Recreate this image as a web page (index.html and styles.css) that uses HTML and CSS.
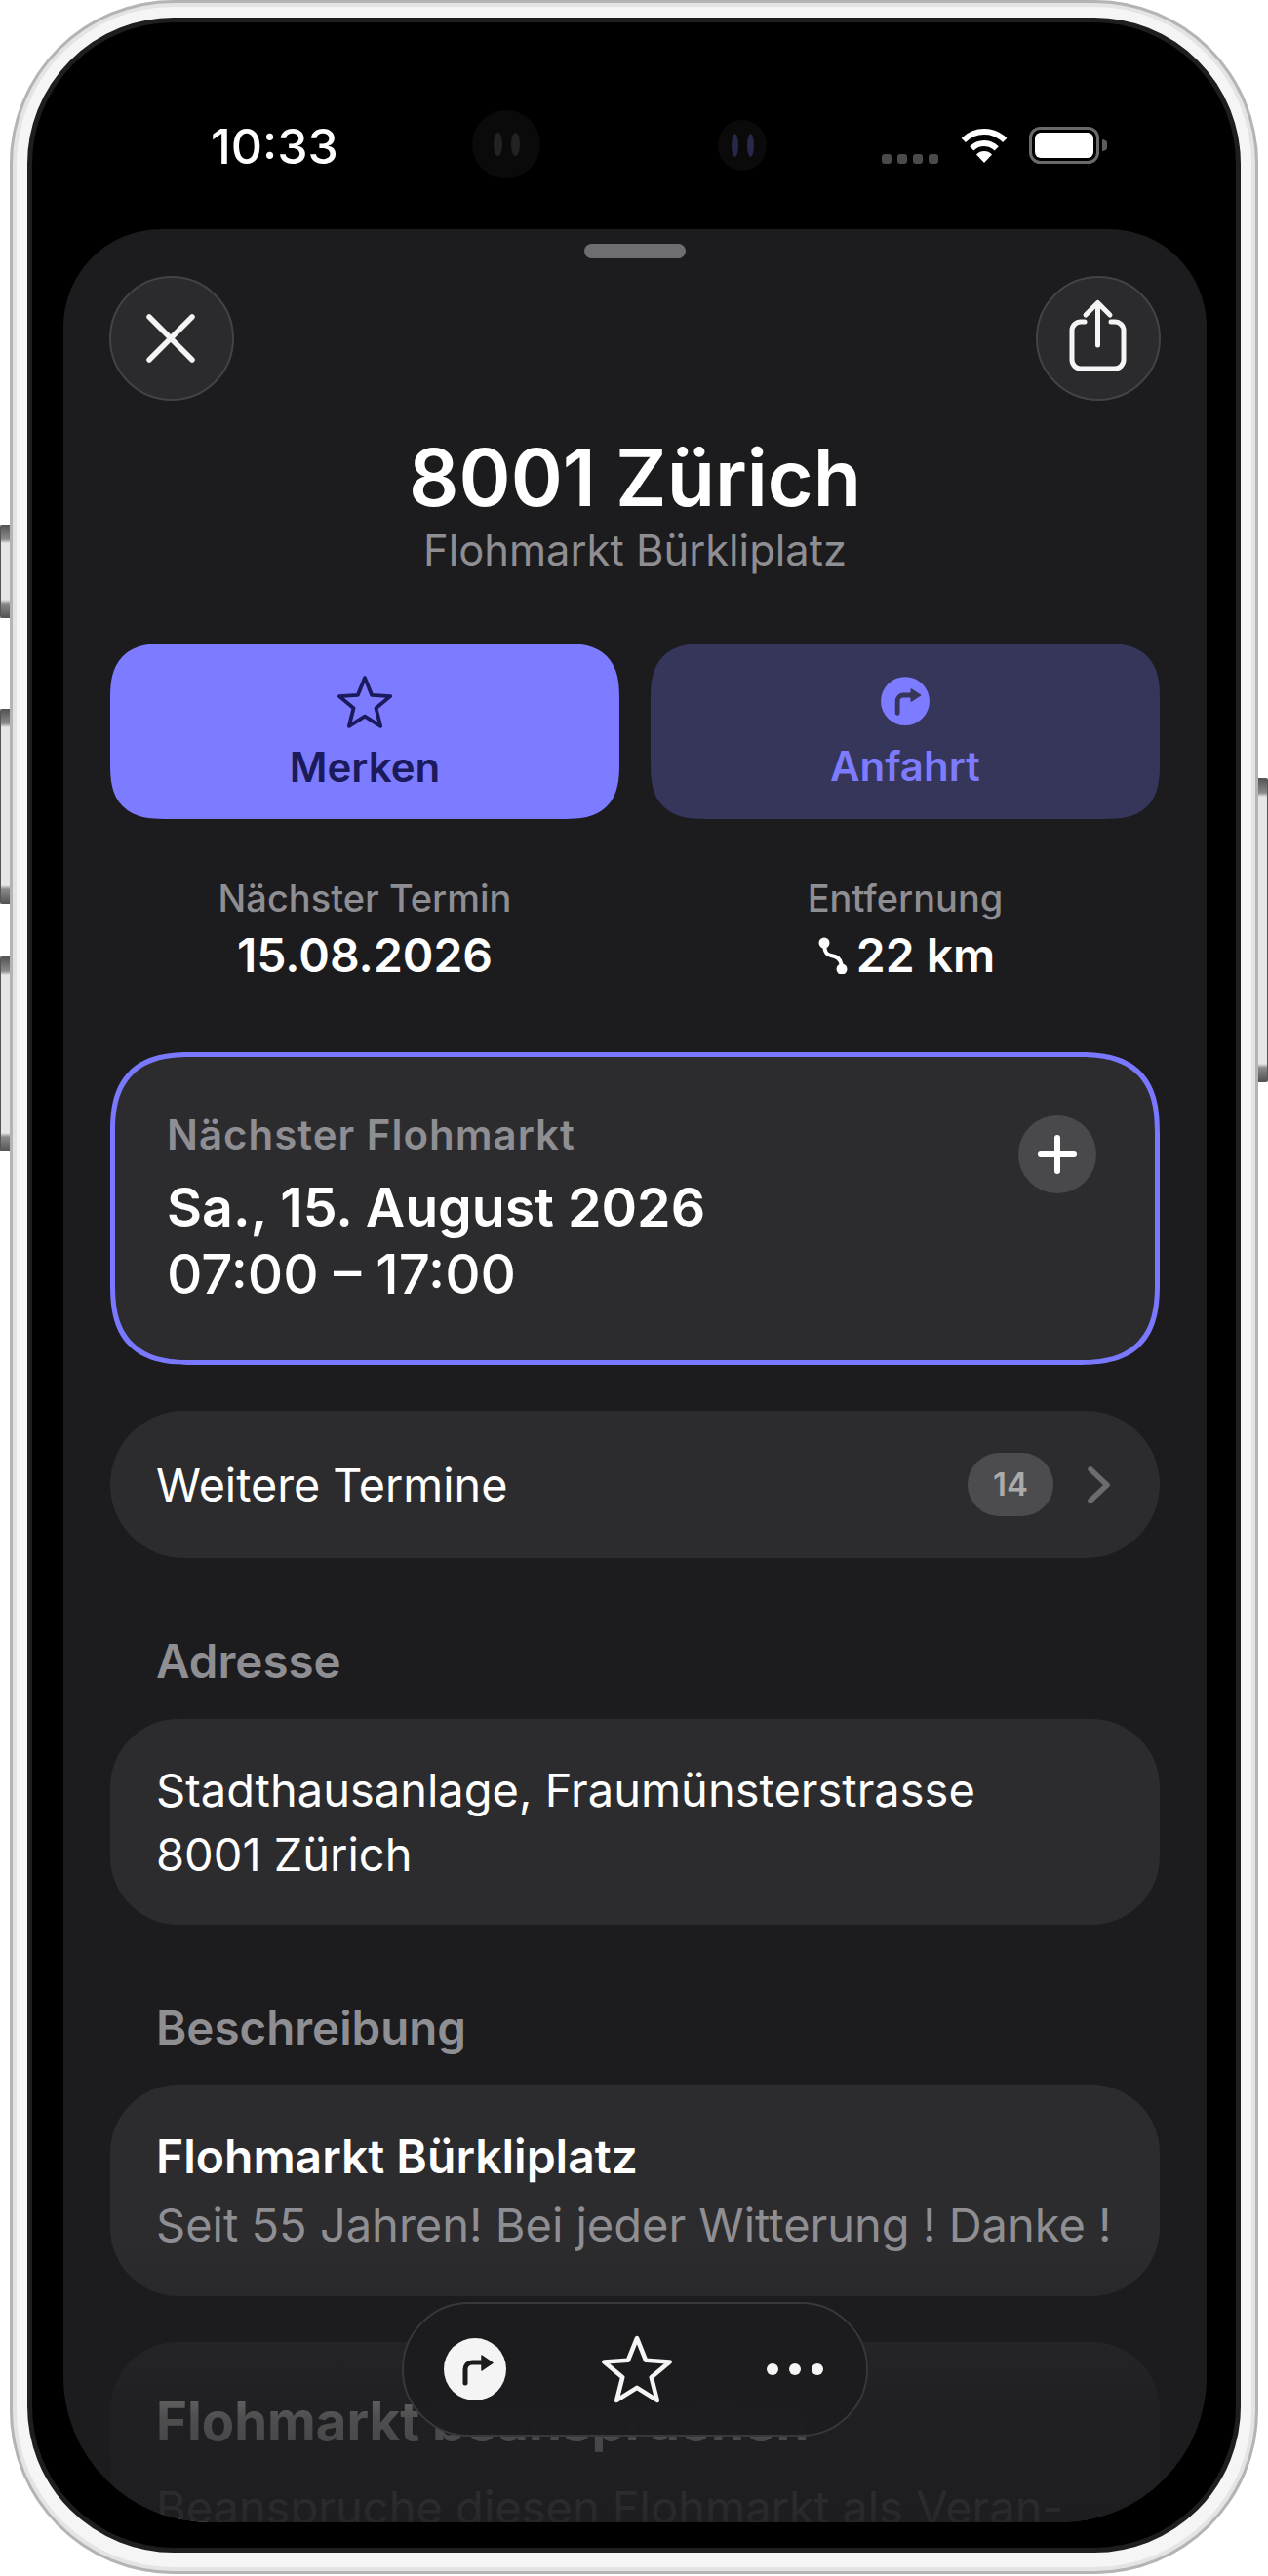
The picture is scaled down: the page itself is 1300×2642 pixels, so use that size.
FILE: index.html
```html
<!DOCTYPE html>
<html lang="de">
<head>
<meta charset="utf-8">
<title>8001 Zürich</title>
<link rel="stylesheet" href="styles.css">
</head>
<body>
<div class="device">
  <span class="hw hw-l1"></span>
  <span class="hw hw-l2"></span>
  <span class="hw hw-l3"></span>
  <span class="hw hw-r1"></span>
  <div class="screen">
    <div class="status">
      <span class="time">10:33</span>
      <span class="lens lens-a"><i></i><i></i></span>
      <span class="lens lens-b"><i></i><i></i></span>
      <span class="signal"><i></i><i></i><i></i><i></i></span>
      <svg class="wifi" viewBox="0 0 48 35"><path d="M2.8 11.8A30 30 0 0 1 45.2 11.8" fill="none" stroke="#fff" stroke-width="6"/><path d="M11.3 20.3A18 18 0 0 1 36.700 20.300" fill="none" stroke="#fff" stroke-width="6"/><path d="M24 35L16 26.500A11 11 0 0 1 32 26.500Z" fill="#fff"/></svg>
      <svg class="battery" viewBox="0 0 80 38"><rect x="1.500" y="1.500" width="69" height="35" rx="10" fill="none" stroke="#6a6a6a" stroke-width="3"/><rect x="6" y="6" width="60" height="26" rx="6" fill="#fff"/><path d="M75 13a6 6 0 0 1 0 12z" fill="#5c5c5c"/></svg>
    </div>
    <main class="sheet">
      <div class="handle"></div>
      <div class="topbar">
        <button class="round-btn">
          <svg viewBox="0 0 124 124"><path d="M39 40L83 84M83 40L39 84" fill="none" stroke="#f5f5f5" stroke-width="5.500" stroke-linecap="round"/></svg>
        </button>
        <button class="round-btn">
          <svg viewBox="0 0 124 124"><path d="M48 45H44a9 9 0 0 0-9 9V84a9 9 0 0 0 9 9H79a9 9 0 0 0 9-9V54a9 9 0 0 0-9-9H75" fill="none" stroke="#f5f5f5" stroke-width="5" stroke-linecap="round"/><path d="M61.500 69V27M49 38L61.500 25.500L74 38" fill="none" stroke="#f5f5f5" stroke-width="5" stroke-linecap="round" stroke-linejoin="round"/></svg>
        </button>
      </div>
      <h1 class="title">8001 Zürich</h1>
      <p class="subtitle">Flohmarkt Bürkliplatz</p>
      <div class="actions">
        <button class="action action-primary">
          <svg class="action-icon" viewBox="-51 -55.750 102 102"><polygon points="0,-50 12.900,-17.800 47.600,-15.450 20.900,6.800 29.400,40.450 0,22 -29.400,40.450 -20.900,6.800 -47.600,-15.450 -12.900,-17.800" fill="none" stroke="#1b1a5c" stroke-width="7" stroke-linejoin="round"/></svg>
          <span class="action-label">Merken</span>
        </button>
        <button class="action action-secondary">
          <svg class="action-icon" viewBox="0 0 64 64"><circle cx="32" cy="31" r="28.500" fill="#7d7bff"/><path d="M23 45V31a7 7 0 0 1 7-7H41" fill="none" stroke="#36365a" stroke-width="5.500" stroke-linecap="round"/><path d="M39 17L50 24L39 31Z" fill="#36365a" stroke="#36365a" stroke-width="1.500" stroke-linejoin="round"/></svg>
          <span class="action-label">Anfahrt</span>
        </button>
      </div>
      <div class="stats">
        <div class="stat">
          <span class="stat-label">Nächster Termin</span>
          <span class="stat-value">15.08.2026</span>
        </div>
        <div class="stat">
          <span class="stat-label">Entfernung</span>
          <span class="stat-value">
            <svg class="route" viewBox="0 0 36 38"><path d="M9 5C9 20 14 18 20 20C26 22 27 28 27 33" fill="none" stroke="#fff" stroke-width="4"/><circle cx="9" cy="6" r="5.500" fill="#fff"/><circle cx="27" cy="33" r="5.500" fill="#fff"/></svg>
            22 km
          </span>
        </div>
      </div>
      <section class="next-card">
        <div class="next-text">
          <div class="next-label">Nächster Flohmarkt</div>
          <div class="next-date">Sa., 15. August 2026</div>
          <div class="next-time">07:00 – 17:00</div>
        </div>
        <button class="plus-btn">
          <svg viewBox="0 0 80 80"><path d="M40 23V57M23 40H57" fill="none" stroke="#fff" stroke-width="6" stroke-linecap="round"/></svg>
        </button>
      </section>
      <div class="more-row">
        <span class="more-text">Weitere Termine</span>
        <span class="badge">14</span>
        <svg class="chevron" viewBox="0 0 26 38"><path d="M4 3L21 19L4 35" fill="none" stroke="#6c6c6e" stroke-width="5.500" stroke-linecap="round" stroke-linejoin="round"/></svg>
      </div>
      <h2 class="section-label">Adresse</h2>
      <div class="card address-card">Stadthausanlage, Fraumünsterstrasse<br>8001 Zürich</div>
      <h2 class="section-label">Beschreibung</h2>
      <div class="card desc-card">
        <div class="desc-title">Flohmarkt Bürkliplatz</div>
        <div class="desc-text">Seit 55 Jahren! Bei jeder Witterung ! Danke !</div>
      </div>
      <div class="card claim-card">
        <div class="claim-title">Flohmarkt beanspruchen</div>
        <div class="claim-text">Beanspruche diesen Flohmarkt als Veran-</div>
      </div>
      <div class="fade"></div>
      <nav class="toolbar">
        <svg class="tool-turn" viewBox="0 0 64 64"><circle cx="32" cy="32" r="32" fill="#f4f4f4"/><path d="M22 46V32a7 7 0 0 1 7-7H41" fill="none" stroke="#1c1c1e" stroke-width="5" stroke-linecap="round"/><path d="M39 18L50 25.500L39 33Z" fill="#1c1c1e" stroke="#1c1c1e" stroke-width="1.500" stroke-linejoin="round"/></svg>
        <svg class="tool-star" viewBox="-51 -55.750 102 102"><polygon points="0,-50 12.900,-17.800 47.600,-15.450 20.900,6.800 29.400,40.450 0,22 -29.400,40.450 -20.900,6.800 -47.600,-15.450 -12.900,-17.800" fill="none" stroke="#f5f5f5" stroke-width="6.500" stroke-linejoin="round"/></svg>
        <span class="tool-dots"><i></i><i></i><i></i></span>
      </nav>
    </main>
  </div>
</div>
</body>
</html>
```
FILE: styles.css
```css
* { box-sizing: border-box; }
html, body { margin: 0; padding: 0; }
body {
  width: 1300px;
  height: 2642px;
  background: #fff;
  overflow: hidden;
  font-family: "Inter", "Liberation Sans", sans-serif;
  color: #fff;
}
button { font: inherit; color: inherit; border: 0; padding: 0; background: none; }
h1, h2, p { margin: 0; }

.device {
  position: relative;
  margin-left: 10px;
  width: 1280px;
  height: 2640px;
  padding: 18px 18px 22px;
  border-radius: 168px;
  background: #f5f5f5;
  box-shadow: inset 0 0 0 3px #b4b4b4, inset 0 0 0 7px #e4e4e4;
}
.hw {
  position: absolute;
  width: 10px;
  background: linear-gradient(#555 0, #8a8a8a 14px, #e6e6e6 18px, #e6e6e6 calc(100% - 18px), #8a8a8a calc(100% - 14px), #555 100%);
  border: 1px solid #555;
}
.hw-l1 { left: -10px; top: 538px; height: 96px; border-right: 0; border-radius: 2px 0 0 2px; }
.hw-l2 { left: -10px; top: 727px; height: 200px; border-right: 0; border-radius: 2px 0 0 2px; }
.hw-l3 { left: -10px; top: 981px; height: 200px; border-right: 0; border-radius: 2px 0 0 2px; }
.hw-r1 { left: 1280px; top: 798px; height: 312px; border-left: 0; border-radius: 0 2px 2px 0; }

.screen {
  display: flex;
  flex-direction: column;
  height: 2600px;
  padding: 0 30px 26px 32px;
  border: 5px solid #1e1e1e;
  border-radius: 150px;
  background: #000;
  overflow: hidden;
}

.status { display: flex; align-items: flex-start; height: 212px; flex: none; padding-left: 151px; }
.time { width: 128px; margin-top: 103px; font-size: 50px; line-height: 48px; font-weight: 500; white-space: nowrap; }
.lens { display: flex; align-items: center; justify-content: center; gap: 9px; border-radius: 50%; background: #0a0a0a; }
.lens i { width: 9px; height: 24px; border-radius: 50%; background: #232325; }
.lens-a { width: 70px; height: 70px; margin-left: 140px; margin-top: 90px; }
.lens-b { width: 50px; height: 52px; margin-left: 182px; margin-top: 100px; }
.lens-b i { width: 7px; background: #28284a; }
.signal { display: flex; gap: 6px; margin-left: 118px; margin-top: 135px; }
.signal i { width: 10px; height: 10px; border-radius: 3px; background: #4a4a4a; }
.wifi { width: 48px; height: 35px; margin-left: 23px; margin-top: 109px; }
.battery { width: 80px; height: 38px; margin-left: 22px; margin-top: 107px; }

.sheet {
  position: relative;
  flex: 1;
  min-height: 0;
  padding: 15px 48px 0;
  background: #1c1c1e;
  border-radius: 100px 100px 150px 150px;
  overflow: hidden;
}
.handle { width: 104px; height: 15px; margin: 0 auto; border-radius: 8px; background: #6e6e70; }
.topbar { display: flex; justify-content: space-between; margin: 18px -1px 0 -1px; }
.round-btn {
  display: block;
  width: 128px;
  height: 128px;
  border: 2px solid #434345;
  border-radius: 50%;
  background: #2b2b2d;
}
.round-btn svg { display: block; width: 124px; height: 124px; }

.title { margin-top: 33px; text-align: center; font-size: 80.500px; line-height: 92px; font-weight: 600; }
.subtitle { margin-top: 4px; text-align: center; font-size: 43.500px; line-height: 48px; color: #8e8e93; }

.actions { display: grid; grid-template-columns: 522px 522px; justify-content: space-between; margin-top: 72px; }
.action { display: flex; flex-direction: column; align-items: center; height: 180px; padding-top: 32px; border-radius: 56px; corner-shape: superellipse(1.4); }
.action-icon { width: 56px; height: 56px; }
.action-label { margin-top: 15px; font-size: 42px; line-height: 48px; font-weight: 600; }
.action-secondary .action-label { margin-top: 14px; }
.action-primary { background: #7d7bff; color: #1b1a5c; }
.action-secondary { background: #36365a; color: #7d7bff; }

.stats { display: grid; grid-template-columns: 522px 522px; justify-content: space-between; margin-top: 59px; }
.stat { display: flex; flex-direction: column; align-items: center; }
.stat-label { font-size: 38px; line-height: 44px; font-weight: 500; color: #8e8e93; }
.stat-value { display: flex; align-items: center; gap: 6px; margin-top: 9px; font-size: 48px; line-height: 56px; font-weight: 600; }
.route { width: 36px; height: 38px; }

.next-card {
  display: flex;
  justify-content: space-between;
  align-items: flex-start;
  height: 321px;
  margin-top: 71px;
  padding: 56px 60px 0 53px;
  border: 5px solid #7a78ff;
  border-radius: 84px;
  corner-shape: superellipse(1.4);
  background: #2c2c2e;
}
.next-label { font-size: 42px; line-height: 48px; font-weight: 600; letter-spacing: 1px; color: #8e8e93; }
.next-date { margin-top: 15px; font-size: 55.500px; line-height: 69px; font-weight: 600; }
.next-time { font-size: 56.500px; line-height: 69px; font-weight: 500; }
.plus-btn { width: 80px; height: 80px; margin-top: 4px; border-radius: 50%; background: #49494b; }
.plus-btn svg { display: block; width: 80px; height: 80px; }

.more-row {
  display: flex;
  align-items: center;
  height: 151px;
  margin-top: 47px;
  padding: 0 49px 0 47px;
  border-radius: 76px;
  background: #2c2c2e;
}
.more-text { flex: 1; font-size: 46.700px; line-height: 56px; }
.badge {
  width: 88px;
  height: 65px;
  border-radius: 33px;
  background: #4c4c4e;
  text-align: center;
  font-size: 33px;
  line-height: 65px;
  font-weight: 600;
  color: #ababab;
}
.chevron { width: 26px; height: 38px; margin-left: 34px; }

.section-label { margin-top: 79px; padding-left: 47px; font-size: 47.500px; line-height: 54px; font-weight: 600; color: #8e8e93; }
.card { background: #2c2c2e; border-radius: 70px; padding-left: 47px; }
.address-card { height: 211px; margin-top: 32px; padding-top: 40px; font-size: 47px; line-height: 66px; }
.desc-card { height: 217px; margin-top: 31px; padding-top: 47px; }
.desc-title { font-size: 48px; line-height: 54px; font-weight: 600; }
.desc-text { margin-top: 15px; font-size: 47px; line-height: 56px; color: #8e8e93; white-space: nowrap; }
.claim-card { height: 300px; margin-top: 47px; padding-top: 51px; }
.claim-title { font-size: 54.500px; line-height: 60px; font-weight: 700; }
.claim-text { margin-top: 31px; font-size: 47px; line-height: 56px; color: #8e8e93; white-space: nowrap; }

.fade {
  position: absolute;
  left: 0;
  right: 0;
  bottom: 0;
  height: 287px;
  background: linear-gradient(rgba(28,28,30,0) 0, rgba(28,28,30,.2) 18%, rgba(28,28,30,.5) 38%, rgba(28,28,30,.78) 63%, rgba(28,28,30,.87) 93%, rgba(28,28,30,.9) 100%);
}
.toolbar {
  position: absolute;
  left: 347px;
  top: 2126px;
  display: flex;
  align-items: center;
  justify-content: space-between;
  width: 478px;
  height: 138px;
  padding: 0 44px 0 41px;
  border: 2px solid #38383a;
  border-radius: 69px;
  background: rgba(28,28,30,.93);
  backdrop-filter: blur(14px);
}
.tool-turn { width: 64px; height: 64px; }
.tool-star { width: 72px; height: 72px; }
.tool-dots { display: flex; gap: 11px; }
.tool-dots i { width: 12px; height: 12px; border-radius: 50%; background: #f5f5f5; }
```
